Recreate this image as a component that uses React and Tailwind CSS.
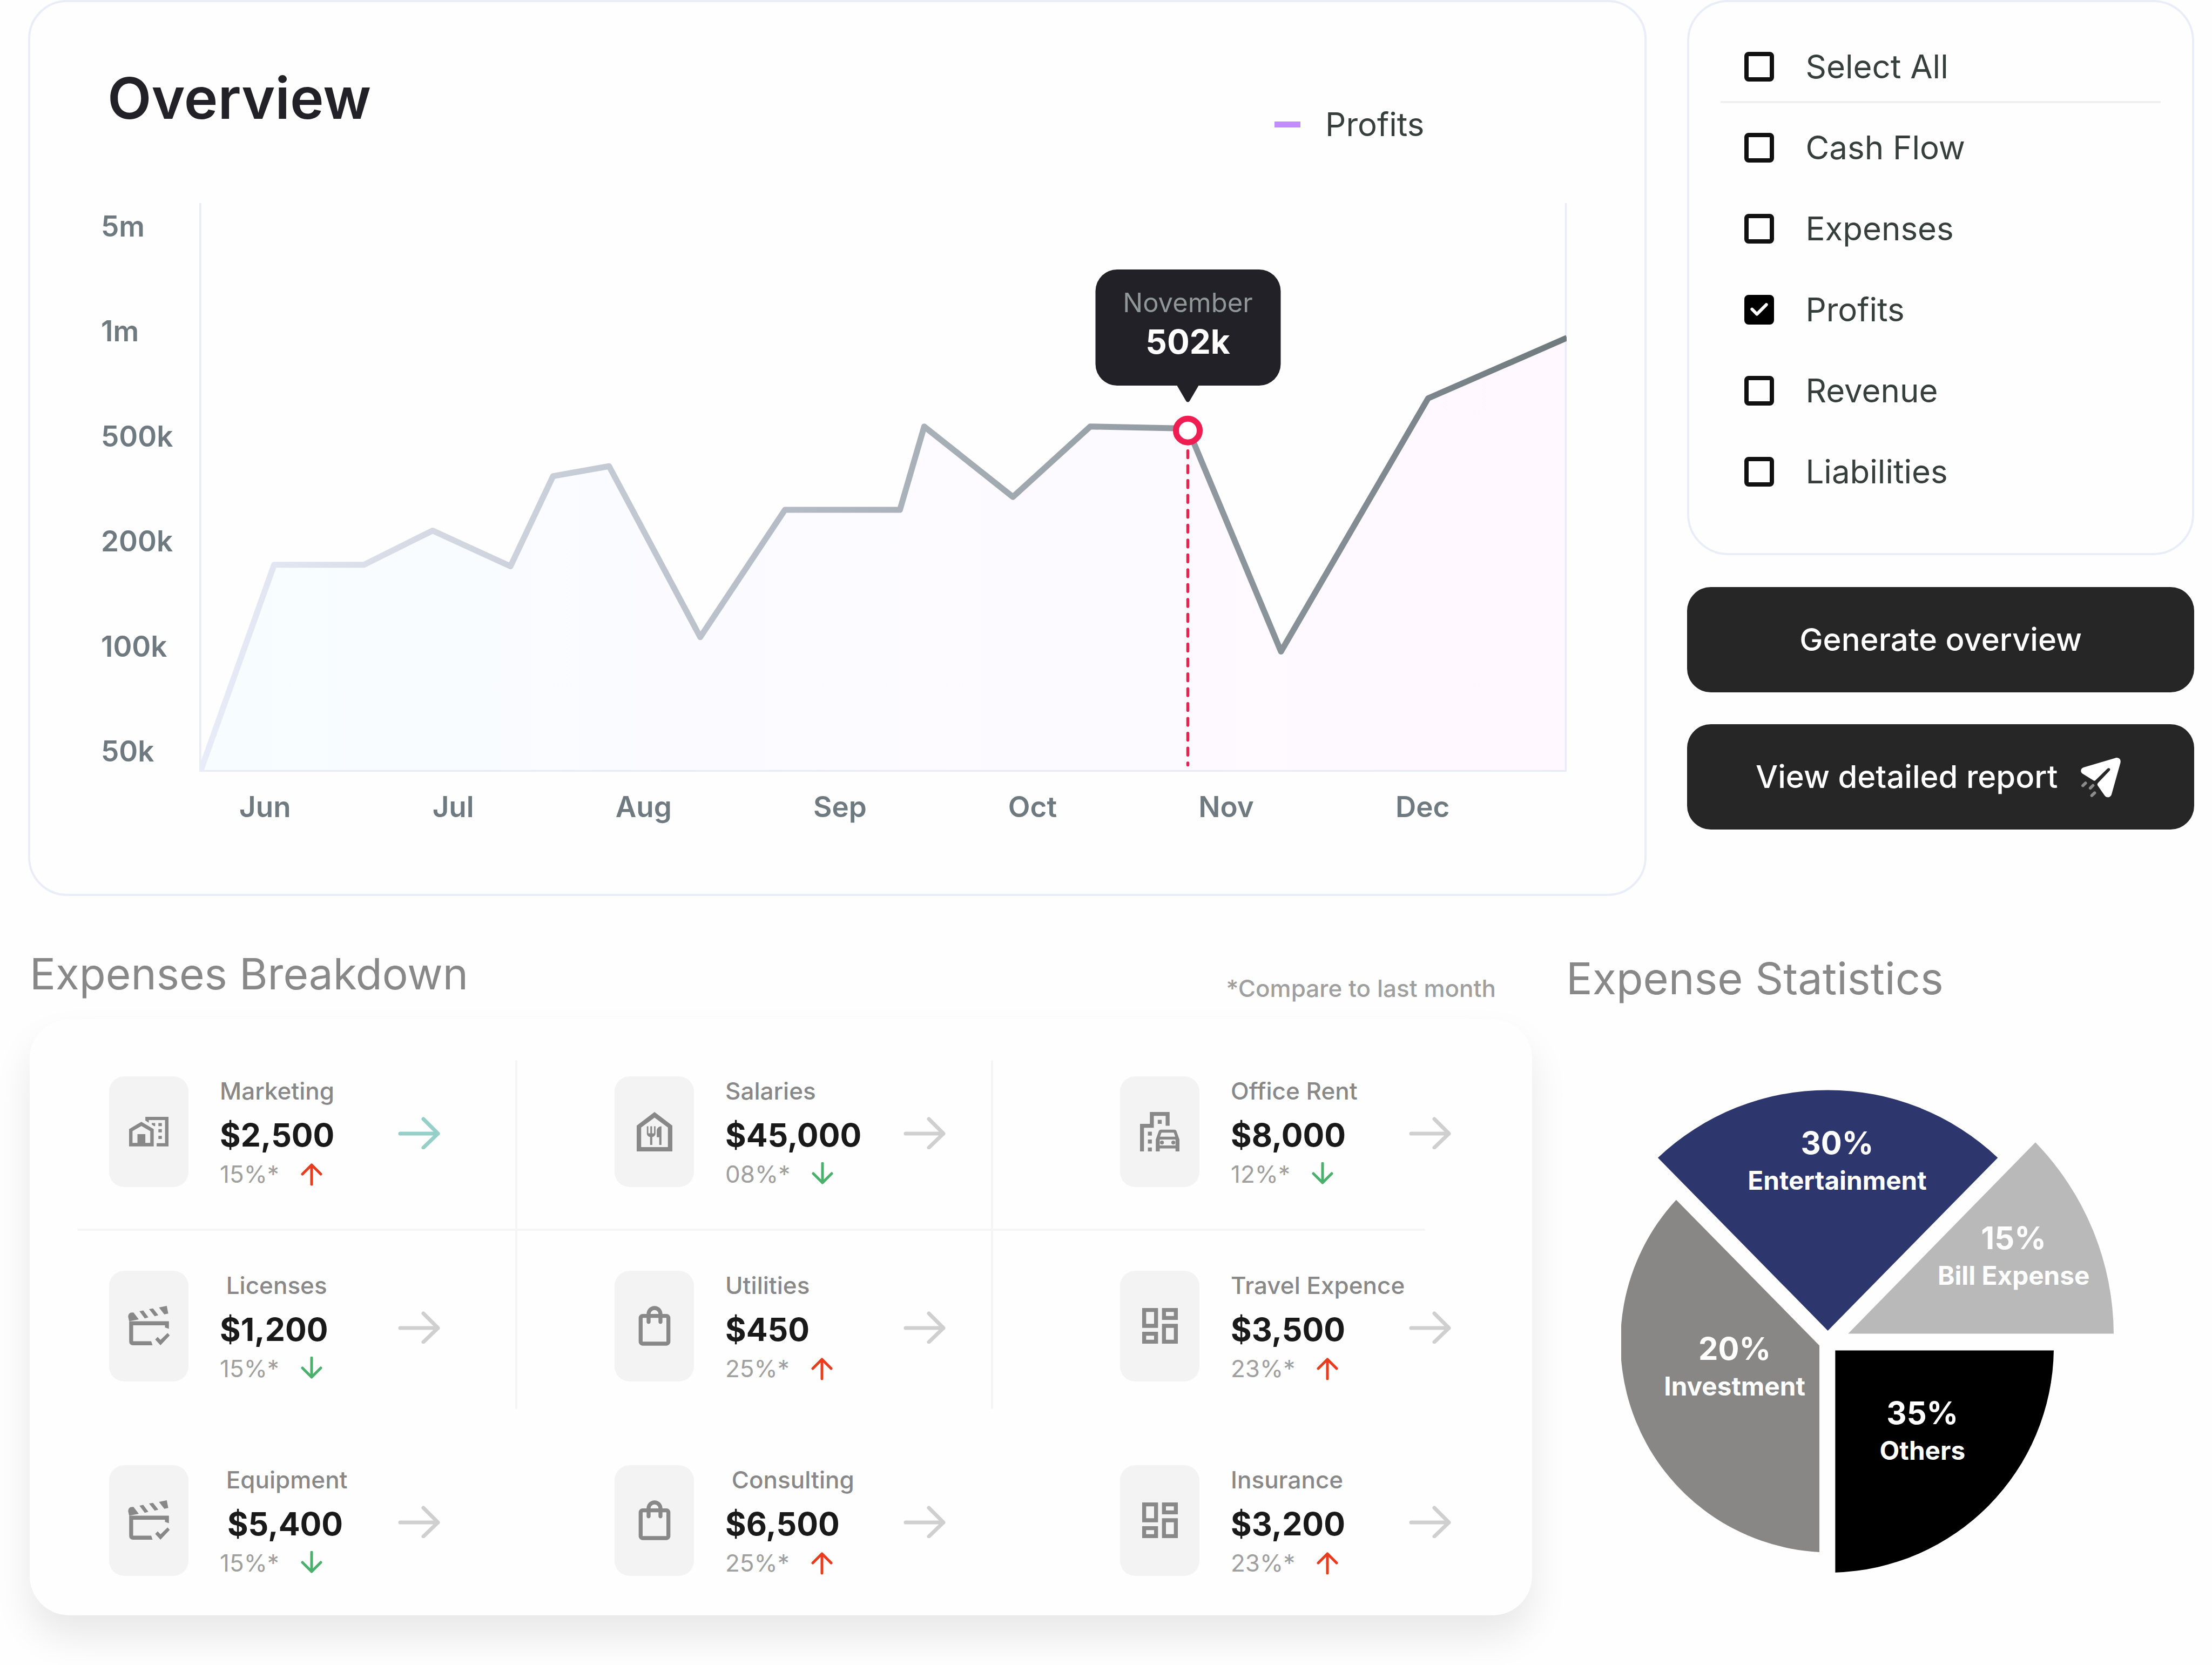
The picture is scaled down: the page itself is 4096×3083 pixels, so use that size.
import { useState } from "react";
import { MdOutlineDashboard, MdOutlineShoppingBag } from "react-icons/md";

const chart = { x: 402, y: 410, width: 2760, height: 1148 };
const marker = { x: 2397, y: 869, tip: 812 };

const points = [
  [405, 1555], [553, 1140], [734, 1140], [873, 1071], [1030, 1143],
  [1116, 961], [1229, 941], [1413, 1286], [1584, 1029], [1816, 1029],
  [1865, 861], [2044, 1003], [2200, 861], [2397, 865], [2585, 1315],
  [2882, 804], [3162, 682],
];

const linePath = "M" + points.map((p) => p.join(" ")).join("L");

const amounts = ["5m", "1m", "500k", "200k", "100k", "50k"];
const months = ["Jun", "Jul", "Aug", "Sep", "Oct", "Nov", "Dec"];
const filters = ["Cash Flow", "Expenses", "Profits", "Revenue", "Liabilities"];

const expenses = [
  { name: "Marketing", value: "$2,500", change: "15%*", up: true, icon: "home", active: true },
  { name: "Salaries", value: "$45,000", change: "08%*", up: false, icon: "food" },
  { name: "Office Rent", value: "$8,000", change: "12%*", up: false, icon: "office" },
  { name: " Licenses", value: "$1,200", change: "15%*", up: false, icon: "clapper" },
  { name: "Utilities", value: "$450", change: "25%*", up: true, icon: "bag" },
  { name: "Travel Expence", value: "$3,500", change: "23%*", up: true, icon: "board" },
  { name: " Equipment", value: " $5,400", change: "15%*", up: false, icon: "clapper" },
  { name: " Consulting", value: "$6,500", change: "25%*", up: true, icon: "bag" },
  { name: "Insurance", value: "$3,200", change: "23%*", up: true, icon: "board" },
];

const slices = [
  { share: "30%", name: "Entertainment", color: "#2e376d", x: 3708, y: 2328, d: "M3689 2684L3346 2335A499 499 0 0 1 4032 2335Z" },
  { share: "15%", name: "Bill Expense", color: "#b9b9b9", x: 4064, y: 2520, d: "M3730 2690L4108 2304A560 560 0 0 1 4266 2690Z" },
  { share: "20%", name: "Investment", color: "#888785", x: 3501, y: 2743, d: "M3672 2714L3383 2420A424 424 0 0 0 3672 3131Z" },
  { share: "35%", name: "Others", color: "#000000", x: 3880, y: 2873, d: "M3704 2724H4145A455 455 0 0 1 3704 3172Z" },
];

function HomeIcon() {
  return (
    <svg viewBox="0 0 80 60" className="w-[73px]" fill="currentColor" aria-hidden="true">
      <path fillRule="evenodd" d="M0 25L25 10L50 25V60H0ZM7 29V53H17V35H33V53H43V29L25 18.500Z" />
      <path d="M33 0H80V60H56V53.500H73V6.500H40V12L33 7.500Z" />
      <path d="M59.500 12.500h7v6.500h-7zM59.500 25h7v6.500h-7zM59.500 38.500h7V45h-7zM46 12.500h7V19H51L46 15.500z" />
    </svg>
  );
}

function FoodIcon() {
  return (
    <svg viewBox="0 0 72 80" className="w-[66px]" fill="currentColor" aria-hidden="true">
      <path fillRule="evenodd" d="M36 0L72 27.500V80H0V27.500ZM9 31.500V71H63V31.500L36 11.500Z" />
      <path d="M20.500 29h3v14h4V29h3.500v14h4V29h3v14c0 4-2.500 6.500-6.500 7.500v16h-4.500v-16c-4-1-6.500-3.500-6.500-7.500zM50 29v37.500h-4.500V51h-5V38c0-5.500 4.500-9 9.500-9z" />
    </svg>
  );
}

function OfficeIcon() {
  return (
    <svg viewBox="0 0 80 80" className="w-[73px]" fill="currentColor" aria-hidden="true">
      <path d="M0 24H20V0H60V28H52V8H28V32H8V80H0Z" />
      <path d="M36 16h8v8h-8zM16 40h8v8h-8zM16 56h8v8h-8zM16 72h8v8h-8z" />
      <path fillRule="evenodd" d="M32 56L38 39Q39 36 42 36H70Q73 36 74 39L80 56V80H72V74H40V80H32ZM43.500 42L40.500 50H71.500L68.500 42ZM40 56V68H72V56Z" />
      <circle cx="44.500" cy="62" r="4" />
      <circle cx="67.500" cy="62" r="4" />
    </svg>
  );
}

function ClapperIcon() {
  return (
    <svg viewBox="0 0 300 300" className="size-[92px]" fill="currentColor" aria-hidden="true">
      <path d="M30 122L24 96C24 80 32 72 42 70L56 69L88 111ZM92 62L115 57L146 99L124 105ZM150 49L174 45L206 86L184 92ZM210 39L257 29L266 76L242 81Z" />
      <path d="M30 122H270V168L246 160V147H54V243H163L171 267H54Q30 267 30 243Z" />
      <path d="M187 232L202 217L219 235L262 193L275 208L219 267Z" />
    </svg>
  );
}

const icons = {
  home: <HomeIcon />,
  food: <FoodIcon />,
  office: <OfficeIcon />,
  clapper: <ClapperIcon />,
  bag: <MdOutlineShoppingBag className="size-[88px]" />,
  board: <MdOutlineDashboard className="size-[88px]" />,
};

function TrendArrow({ up }) {
  return (
    <svg
      viewBox="0 0 40 44"
      className={up ? "w-10 text-[#e73c1d]" : "w-10 text-[#4bb06c]"}
      fill="none"
      stroke="currentColor"
      strokeWidth="5"
      strokeLinecap="round"
      strokeLinejoin="round"
      role="img"
      aria-label={up ? "Up" : "Down"}
    >
      <path d={up ? "M20 41V5M3 22L20 5L37 22" : "M20 2V38M3 21L20 38L37 21"} />
    </svg>
  );
}

function Expense({ item }) {
  return (
    <li className="flex items-center">
      <div className="mr-[58px] flex h-[205px] w-[147px] shrink-0 items-center justify-center rounded-[28px] bg-[#f3f3f3] text-[#888888]">
        {icons[item.icon]}
      </div>
      <div className="pt-1 whitespace-pre">
        <p className="text-[44px] leading-[64px] font-medium text-[#888888]">{item.name}</p>
        <p className="mt-[10px] text-[59px] leading-[80px] font-bold text-[#191919]">{item.value}</p>
        <p className="flex items-center gap-10 text-[44px] leading-[64px] text-[#9f9f9f]">
          {item.change}
          <TrendArrow up={item.up} />
        </p>
      </div>
      <button
        type="button"
        aria-label={"Open " + item.name.trim()}
        className={item.active ? "ml-auto shrink-0 text-[#95cfc8]" : "ml-auto shrink-0 text-[#cfcfcf]"}
      >
        <svg viewBox="0 0 78 66" className="w-[78px]" fill="none" stroke="currentColor" strokeWidth="7" strokeLinecap="round" strokeLinejoin="round" aria-hidden="true">
          <path d="M4 37H74M47 10L74 37L47 63" />
        </svg>
      </button>
    </li>
  );
}

function Checkbox({ label, checked, onChange }) {
  return (
    <label className="flex h-full items-center gap-[58px] text-[60px] text-[#363f3c]">
      <span className="grid shrink-0">
        <input
          type="checkbox"
          checked={checked}
          onChange={onChange}
          className="col-start-1 row-start-1 size-[55px] appearance-none rounded-lg border-8 border-[#111111] checked:border-black checked:bg-black"
        />
        {checked && (
          <svg viewBox="0 0 85 85" className="pointer-events-none col-start-1 row-start-1 size-[55px]" fill="none" stroke="white" strokeWidth="9" strokeLinecap="round" strokeLinejoin="round" aria-hidden="true">
            <path d="M22 41L36 55L63 28" />
          </svg>
        )}
      </span>
      {label}
    </label>
  );
}

function Overview() {
  return (
    <section className="min-w-0 flex-1 rounded-[72px] border-4 border-[#e8edf8]">
      <header className="flex h-[372px] items-start justify-between pt-[118px] pr-[408px] pl-[143px]">
        <h1 className="text-[106px] leading-[120px] font-semibold text-[#212127]">Overview</h1>
        <p className="flex items-center gap-[46px] pt-[76px] text-[60px] leading-[64px] text-[#363f3c]">
          <span className="h-[11px] w-12 bg-[#c08cff]" />
          Profits
        </p>
      </header>
      <div className="grid grid-cols-[182px_1fr] pr-36 pb-[129px] pl-[131px] font-semibold text-[#6f7a80]">
        <ul className="flex flex-col justify-between pt-[11px] pb-[6px] text-[53px] leading-[64px]">
          {amounts.map((amount) => (
            <li key={amount}>{amount}</li>
          ))}
        </ul>
        <div className="relative">
          <svg viewBox={[chart.x, chart.y, chart.width, chart.height].join(" ")} className="block w-full" fill="none" role="img" aria-label="Profits by month">
            <defs>
              <linearGradient id="line" gradientUnits="userSpaceOnUse" x1="405" y1="0" x2="3162" y2="0">
                <stop stopColor="#e8ecf8" />
                <stop offset="1" stopColor="#6f7a7f" />
              </linearGradient>
              <linearGradient id="area" gradientUnits="userSpaceOnUse" x1="405" y1="0" x2="3162" y2="0">
                <stop stopColor="#f7fdff" />
                <stop offset="0.15" stopColor="#f8fcff" />
                <stop offset="0.35" stopColor="#fbfbff" />
                <stop offset="0.7" stopColor="#fdfaff" />
                <stop offset="1" stopColor="#fff8fe" />
              </linearGradient>
            </defs>
            <path d={linePath + "V1556H405Z"} fill="url(#area)" />
            <path d="M404 410V1556H3160V410" stroke="#e8ecf8" strokeWidth="4" />
            <path d={linePath} stroke="url(#line)" strokeWidth="12" strokeLinejoin="round" />
            <path d="M2397 910V1544" stroke="#ee1d52" strokeWidth="6" strokeDasharray="14 16" strokeLinecap="round" />
            <circle cx={marker.x} cy={marker.y} r="24" fill="white" stroke="#ee1d52" strokeWidth="12" />
          </svg>
          <div
            className="absolute -translate-x-1/2 text-center"
            style={{
              left: ((marker.x - chart.x) / chart.width) * 100 + "%",
              bottom: (1 - (marker.tip - chart.y) / chart.height) * 100 + "%",
            }}
          >
            <div className="w-[343px] rounded-[40px] bg-[#212127] pt-[30px] pb-[41px]">
              <p className="text-[49px] leading-[64px] font-normal text-[#8f9799]">November</p>
              <p className="text-[62px] leading-[80px] font-bold text-white">502k</p>
            </div>
            <svg viewBox="0 0 40 31" className="mx-auto block w-10 fill-[#212127]" aria-hidden="true">
              <path d="M0 0H40L23 29Q20 32 17 29Z" />
            </svg>
          </div>
        </div>
        <ul className="col-start-2 mt-[33px] flex justify-between pr-[217px] pl-[74px] text-[53px] leading-[64px]">
          {months.map((month) => (
            <li key={month}>{month}</li>
          ))}
        </ul>
      </div>
    </section>
  );
}

function Sidebar() {
  const [selected, setSelected] = useState(["Profits"]);
  const all = selected.length === filters.length;
  const toggle = (name) =>
    setSelected(selected.includes(name) ? selected.filter((n) => n !== name) : [...selected, name]);

  return (
    <aside className="flex w-[23.4%] shrink-0 flex-col gap-[59px]">
      <div className="rounded-[76px] border-4 border-[#e8edf8] px-[58px] pt-[55px] pb-[76px]">
        <div className="h-[132px] border-b-4 border-[#efefef] pl-[44px]">
          <Checkbox label="Select All" checked={all} onChange={() => setSelected(all ? [] : filters)} />
        </div>
        <ul className="mt-[7px] pl-[44px]">
          {filters.map((name) => (
            <li key={name} className="h-[150px]">
              <Checkbox label={name} checked={selected.includes(name)} onChange={() => toggle(name)} />
            </li>
          ))}
        </ul>
      </div>
      <button type="button" className="h-[195px] rounded-[44px] bg-[#262626] text-[58px] font-medium text-white">
        Generate overview
      </button>
      <button type="button" className="flex h-[195px] items-center justify-center gap-[34px] rounded-[44px] bg-[#262626] text-[58px] font-medium text-white">
        View detailed report
        <svg viewBox="0 0 300 300" className="size-[92px]" aria-hidden="true">
          <path fill="white" d="M239 34C258 29 274 43 269 63L216 252C210 274 186 278 174 262L133 203C128 195 129 189 134 184L203 112C208 106 208 102 205 99C201 94 195 95 190 99L119 168C114 173 110 173 104 169L41 130C25 119 27 98 46 91Z" />
          <path stroke="#8c8c8c" strokeWidth="18" strokeLinecap="round" d="M42 201L58 186M87 216L103 200M96 261L113 245" />
        </svg>
      </button>
    </aside>
  );
}

function Breakdown() {
  return (
    <section className="min-w-0 flex-1">
      <header className="flex items-start justify-between pr-[67px]">
        <h2 className="text-[80px] leading-[96px] text-[#888888]">Expenses Breakdown</h2>
        <p className="pt-[43px] text-[44px] leading-[64px] font-medium text-[#9f9f9f]">*Compare to last month</p>
      </header>
      <div className="relative mt-[25px] rounded-[73px] bg-[#fefefe] pt-[97px] pr-[150px] pb-[65px] pl-[147px] shadow-[0_40px_70px_rgba(0,0,0,0.09)]">
        <span className="absolute top-[76px] bottom-[382px] left-[32.3%] w-1 rounded-full bg-[#f5f5f5]" />
        <span className="absolute top-[76px] bottom-[382px] left-[64%] w-1 rounded-full bg-[#f5f5f5]" />
        <span className="absolute top-[388px] right-[198px] left-[88px] h-1 rounded-full bg-[#f5f5f5]" />
        <ul className="grid grid-cols-3 gap-x-[323px] gap-y-[138px]">
          {expenses.map((item) => (
            <Expense key={item.name} item={item} />
          ))}
        </ul>
      </div>
    </section>
  );
}

function Statistics() {
  return (
    <section className="w-[1163px] shrink-0 pt-[9px]">
      <h2 className="text-[81px] leading-[96px] text-[#888888]">Expense Statistics</h2>
      <svg viewBox="3272 2198 994 974" className="mt-[158px] ml-[102px] w-[912px]" fontFamily="Inter, sans-serif" fontWeight="700" textAnchor="middle" role="img" aria-label="Expense shares">
        {slices.map((slice) => (
          <g key={slice.name}>
            <path d={slice.d} fill={slice.color} />
            <text x={slice.x} y={slice.y} fontSize="63" fill="white">{slice.share}</text>
            <text x={slice.x} y={slice.y + 72} fontSize="52" fill="white">{slice.name}</text>
          </g>
        ))}
      </svg>
    </section>
  );
}

export default function App() {
  return (
    <main className="min-h-screen bg-[#fefefe] font-['Inter',sans-serif]">
      <div className="flex items-start gap-[75px] pr-[33px] pl-[52px]">
        <Overview />
        <Sidebar />
      </div>
      <div className="mt-24 flex items-start gap-[63px] pr-[33px] pl-[55px]">
        <Breakdown />
        <Statistics />
      </div>
    </main>
  );
}
